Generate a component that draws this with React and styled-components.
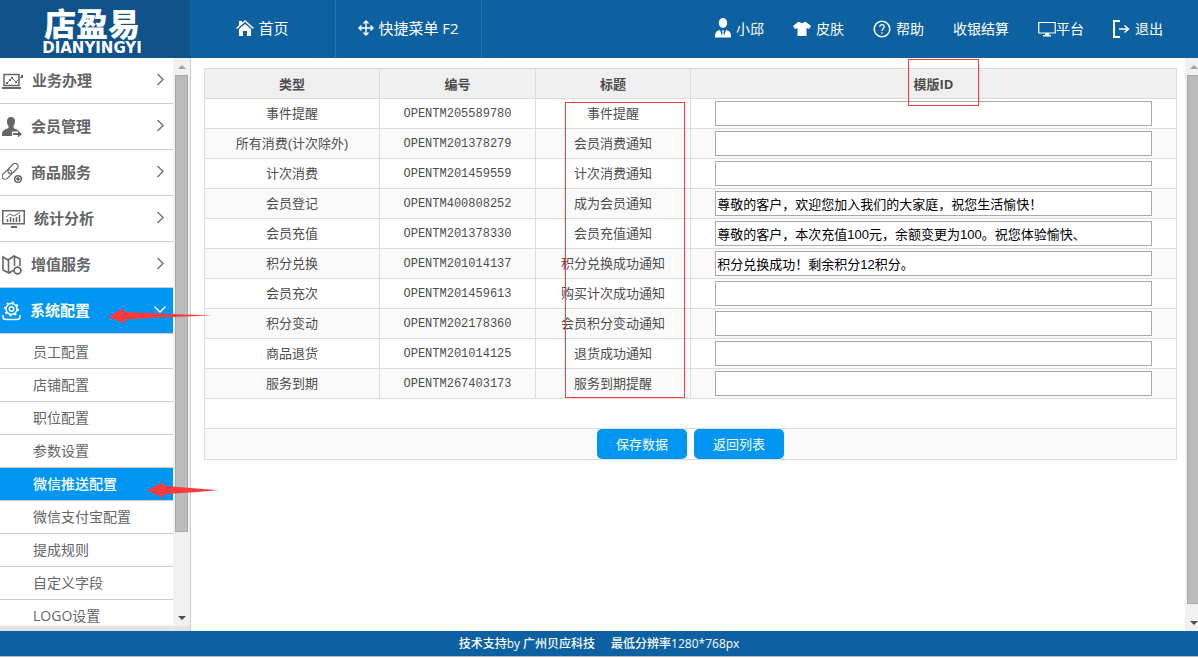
import React from "react";
import styled, { createGlobalStyle, css } from "styled-components";

const GlobalStyle = createGlobalStyle`
  * { box-sizing: border-box; }
  body {
    margin: 0;
    background: #fff;
    color: #4d4d4d;
    font: 13px/20px "Open Sans", "Noto Sans CJK SC", sans-serif;
  }
  a { color: inherit; text-decoration: none; }
`;

const Page = styled.div`
  display: flex;
  flex-direction: column;
  height: 100vh;
  overflow: hidden;
`;

const Header = styled.header`
  display: flex;
  flex: none;
  height: 58px;
  background: #0d61a1;
  color: #fff;
`;

const Logo = styled.a`
  display: flex;
  flex-direction: column;
  align-items: center;
  gap: 4px;
  width: 190px;
  padding: 6px 6px 0 0;
  background: #10528a;
`;

const LogoName = styled.span`
  font: 900 32px/32px "Noto Sans CJK SC", sans-serif;
`;

const LogoLatin = styled.span`
  font: bold 15px/12px "DejaVu Sans", sans-serif;
`;

const MainNav = styled.nav`
  display: flex;
  flex: 1;
`;

const NavItem = styled.a`
  display: flex;
  align-items: center;
  justify-content: center;
  gap: 4px;
  width: 146px;
  padding-bottom: 2px;
  border-right: 1px solid #2a74ad;
  font-size: 15px;
`;

const UserNav = styled.nav`
  display: flex;
  gap: 29px;
  padding-right: 35px;
`;

const UserItem = styled.a`
  display: flex;
  align-items: center;
  gap: ${(p) => (p.$tight ? "0" : "5px")};
  font-size: 14px;
`;

const Body = styled.div`
  display: flex;
  flex: 1;
  min-height: 0;
`;

const Sidebar = styled.aside`
  position: relative;
  display: flex;
  flex: none;
  flex-direction: column;
  width: 191px;
  border-right: 1px solid #ccc;
`;

const SidebarView = styled.div`
  display: flex;
  flex: 1;
  min-height: 0;
`;

const SidebarEdge = styled.div`
  height: 5px;
  background: #e4e4e4;
`;

const Menu = styled.nav`
  flex: 1;
  overflow: hidden;
`;

const MenuItem = styled.a`
  display: flex;
  align-items: center;
  gap: 9px;
  height: 46px;
  padding: 0 6px 0 2px;
  border-bottom: 1px solid #ccc;
  font-size: 15px;
  font-weight: bold;
  color: #666;
  ${(p) => p.$active && css`
    background: #0096f2;
    color: #fff;
  `}
`;

const MenuLabel = styled.span`
  flex: 1;
  padding-bottom: 2px;
`;

const SubMenu = styled.div`
  padding-top: 2px;
`;

const SubItem = styled.a`
  display: block;
  height: 33px;
  padding-left: 33px;
  border-bottom: 1px solid #ccc;
  font-size: 14px;
  line-height: 32px;
  color: #666;
  ${(p) => p.$active && css`
    background: #0096f2;
    color: #fff;
    font-weight: 500;
  `}
`;

const Bar = styled.div`
  display: flex;
  flex: none;
  flex-direction: column;
  width: ${(p) => p.$width};
  overflow: hidden;
  background: #f1f1f1;
`;

const BarArrow = styled.span`
  display: flex;
  align-items: center;
  flex: none;
  height: 17px;
  padding-left: 5px;
`;

const BarThumb = styled.span`
  flex: ${(p) => p.$share} 0 0;
  width: 13px;
  margin-left: 2px;
  border: 1px solid #a8a8a8;
  background: #bbb;
`;

const BarRest = styled.span`
  flex: ${(p) => p.$share} 0 0;
`;

const Pointer = styled.svg`
  position: absolute;
  z-index: 2;
  left: ${(p) => p.$left};
  top: ${(p) => p.$top};
  pointer-events: none;
`;

const Content = styled.main`
  flex: 1;
  min-width: 0;
  padding: 10px 8px 0 13px;
`;

const TableArea = styled.div`
  position: relative;
`;

const Table = styled.table`
  width: 100%;
  table-layout: fixed;
  border-collapse: collapse;
  border: 1px solid #dcdcdc;
`;

const Column = styled.col`
  width: ${(p) => p.$width};
`;

const Row = styled.tr`
  height: 30px;
  background: ${(p) => (p.$striped ? "#fafafa" : "#fff")};
`;

const HeadCell = styled.th`
  padding: 0;
  border: 1px solid #dcdcdc;
  background: #f0f0f0;
`;

const Cell = styled.td`
  height: 30px;
  padding: 0;
  border: 1px solid #dcdcdc;
  text-align: center;
  font-family: ${(p) => (p.$code ? '"Liberation Mono", monospace' : '"Liberation Sans", "Noto Sans CJK SC", sans-serif')};
  font-size: ${(p) => (p.$code ? "12px" : "13px")};
`;

const Marked = styled.span`
  position: relative;
`;

const Frame = styled.span`
  position: absolute;
  z-index: 1;
  left: ${(p) => p.$left};
  top: ${(p) => p.$top};
  width: ${(p) => p.$width};
  height: ${(p) => p.$height};
  border: 1px solid #fa3c3c;
  pointer-events: none;
`;

const Field = styled.input`
  display: block;
  width: 90%;
  height: 25px;
  margin: 0 auto;
  padding: 1px;
  border: 1px solid #a9a9a9;
  border-radius: 0;
  background: #fff;
  color: #000;
  font: 13px "Liberation Sans", "Noto Sans CJK SC", sans-serif;
`;

const Actions = styled.div`
  display: flex;
  justify-content: center;
  gap: 7px;
`;

const Button = styled.button`
  width: 90px;
  height: 30px;
  padding: 0 0 2px;
  border: 0;
  border-radius: 5px;
  background: #0096f2;
  color: #fff;
  font: 13px "Noto Sans CJK SC", sans-serif;
`;

const Footer = styled.footer`
  display: flex;
  flex: none;
  justify-content: center;
  gap: 16px;
  height: 26px;
  margin-bottom: 2px;
  border-bottom: 1px solid #b8b8b8;
  background: #0d61a1;
  color: #fff;
  font-size: 12px;
  font-weight: 500;
  line-height: 25px;
`;

const HomeIcon = () => (
  <svg width="18" height="18" viewBox="0 0 18 18" fill="#fff">
    <path d="M0 9 9 1l9 8-1 1-8-7-8 7zM3 2h3v2L3 7z" />
    <path d="M3 10l6-5 6 5v7h-4v-5H7v5H3z" />
  </svg>
);

const MoveIcon = () => (
  <svg width="16" height="16" viewBox="0 0 16 16" fill="none" stroke="#fff" strokeWidth="1.4">
    <path d="M8 1v14M1 8h14M5.5 3.5 8 1l2.5 2.5M5.5 12.500 8 15l2.500-2.500M3.500 5.500 1 8l2.500 2.500M12.500 5.500 15 8l-2.500 2.500" />
  </svg>
);

const UserIcon = () => (
  <svg width="16" height="22" viewBox="0 0 16 22" fill="#fff">
    <ellipse cx="8" cy="5" rx="4.200" ry="5" />
    <path d="M0 19.500v-2c0-3 2-5 5-5.500l2 6 .5-4-.8-1.500h2.600l-.8 1.500.5 4 2-6c3 .5 5 2.500 5 5.500v2z" />
  </svg>
);

const ShirtIcon = () => (
  <svg width="18" height="16" viewBox="0 0 18 16" fill="#fff">
    <path d="M0 5 5 1h2q2 2.500 4 0h2l5 4-2 3-2.500-1V15h-9V7L2 8z" />
  </svg>
);

const HelpIcon = () => (
  <svg width="18" height="18" viewBox="0 0 18 18" fill="none" stroke="#fff" strokeWidth="1.500">
    <circle cx="9" cy="9" r="7.800" />
    <path d="M6.800 7c0-3.200 4.600-3 4.500-.2C11.200 8.500 9 8.600 9 11M9 12.300v1.500" strokeWidth="1.200" />
  </svg>
);

const ScreenIcon = () => (
  <svg width="18" height="16" viewBox="0 0 18 16" fill="none" stroke="#fff">
    <path d="M.75 1.500h16.500v10.500H.75z" strokeWidth="1.200" />
    <path d="M7 12h4v2h2v1.500H5V14h2z" fill="#fff" stroke="none" />
  </svg>
);

const ExitIcon = () => (
  <svg width="17" height="18" viewBox="0 0 17 18" fill="none" stroke="#fff" strokeWidth="2">
    <path d="M7 1H1v16h6" />
    <path d="M6 9h9M11.500 5.500 15.500 9l-4 3.500" strokeWidth="1.600" />
  </svg>
);

const BusinessIcon = () => (
  <svg width="21" height="18" viewBox="0 0 21 18" fill="none" stroke="#666">
    <path d="M2 2.500h15v11H2z" strokeWidth="1.500" />
    <path d="M0 16h19" strokeWidth="2" />
    <path d="M5 11l3-3 2-2 4 4 6-6" />
    <path d="M5 10v2M8 7v2M10 5v2M14 9v2M20 3v3" strokeWidth="2" />
  </svg>
);

const MemberIcon = () => (
  <svg width="20" height="20" viewBox="0 0 20 20" fill="#666">
    <path d="M9 0c3 0 4.300 2 4 5-.2 2-1 3-1.500 4v2c2 1 4 1.500 5 3l-2 .5H10v4.500H0c0-5 1-6 6.500-8V9C5.500 8 5 7 5 5c-.3-3 1-5 4-5z" />
    <path d="M11 16h5v-2.500l4 3.500-4 3.500V18h-5z" />
  </svg>
);

const LinkIcon = () => (
  <svg width="20" height="20" viewBox="0 0 20 20" fill="none" stroke="#666" strokeWidth="1.200">
    <rect x="-5.500" y="-3" width="11" height="6" rx="3" transform="translate(5 11.500) rotate(-45)" />
    <rect x="-6" y="-3" width="12" height="6" rx="3" transform="translate(11 5.500) rotate(-45)" />
    <circle cx="16" cy="16" r="3.300" strokeWidth="1.500" />
    <path d="M16 14v4M14 16h4" strokeWidth="1.500" />
  </svg>
);

const StatsIcon = () => (
  <svg width="23" height="20" viewBox="0 0 23 20" fill="none" stroke="#666">
    <path d="M.75 1.750h21.500v13H.75z" strokeWidth="1.500" />
    <path d="M9 18h6" strokeWidth="2" />
    <path d="M5.500 13v-3M8.500 13V8M11.500 13V9M14.500 13V8M17.500 13V6" strokeWidth="1.500" />
    <path d="M4 8l4-3 4 2 6-3.500" />
  </svg>
);

const MapIcon = () => (
  <svg width="20" height="20" viewBox="0 0 20 20" fill="none" stroke="#666" strokeWidth="1.600">
    <path d="M11 15.500l-4 2.500-6-3V2l5 3 6-4 6 3v7M6.500 5v13M12.500 1v10" />
    <circle cx="15.500" cy="15.500" r="3.300" />
    <path d="M15.500 12v-1M15.500 20v-1M12 15.500h-1M20 15.500h-1" />
  </svg>
);

const GearIcon = () => (
  <svg width="19" height="20" viewBox="0 0 19 20" fill="none" stroke="#fff" strokeWidth="1.500">
    <circle cx="9.500" cy="8" r="5.500" />
    <circle cx="9.500" cy="8" r="2.200" />
    <circle cx="9.500" cy="8" r="6.700" strokeWidth="1.800" strokeDasharray="2 3.260" />
    <path d="M1 14v2q0 2.500 3 2.500h11q3 0 3-2.500v-2" />
  </svg>
);

const Chevron = ({ open }) => (
  <svg width="14" height="14" viewBox="0 0 14 14" fill="none" stroke={open ? "#fff" : "#777"} strokeWidth="1.500">
    <path d={open ? "M1.500 2.500 7 8l5.500-5.500" : "M4.500 0 10 5.500l-5.500 5.500"} />
  </svg>
);

const ScrollBar = ({ width, thumb, rest }) => (
  <Bar $width={width} aria-hidden="true">
    <BarArrow>
      <svg width="8" height="4" viewBox="0 0 8 4" fill="#a0a0a0"><path d="M0 4 4 0l4 4z" /></svg>
    </BarArrow>
    <BarThumb $share={thumb} />
    <BarRest $share={rest} />
    <BarArrow>
      <svg width="8" height="4" viewBox="0 0 8 4" fill="#505050"><path d="M0 0h8L4 4z" /></svg>
    </BarArrow>
  </Bar>
);

const menu = [
  ["业务办理", BusinessIcon],
  ["会员管理", MemberIcon],
  ["商品服务", LinkIcon],
  ["统计分析", StatsIcon],
  ["增值服务", MapIcon],
  ["系统配置", GearIcon],
];

const subMenu = ["员工配置", "店铺配置", "职位配置", "参数设置", "微信推送配置", "微信支付宝配置", "提成规则", "自定义字段", "LOGO设置"];

const templates = [
  ["事件提醒", "OPENTM205589780", "事件提醒", ""],
  ["所有消费(计次除外)", "OPENTM201378279", "会员消费通知", ""],
  ["计次消费", "OPENTM201459559", "计次消费通知", ""],
  ["会员登记", "OPENTM400808252", "成为会员通知", "尊敬的客户，欢迎您加入我们的大家庭，祝您生活愉快！"],
  ["会员充值", "OPENTM201378330", "会员充值通知", "尊敬的客户，本次充值100元，余额变更为100。祝您体验愉快、"],
  ["积分兑换", "OPENTM201014137", "积分兑换成功通知", "积分兑换成功！剩余积分12积分。"],
  ["会员充次", "OPENTM201459613", "购买计次成功通知", ""],
  ["积分变动", "OPENTM202178360", "会员积分变动通知", ""],
  ["商品退货", "OPENTM201014125", "退货成功通知", ""],
  ["服务到期", "OPENTM267403173", "服务到期提醒", ""],
];

export default function App() {
  return (
    <Page>
      <GlobalStyle />
      <Header>
        <Logo href="#">
          <LogoName>店盈易</LogoName>
          <LogoLatin>DIANYINGYI</LogoLatin>
        </Logo>
        <MainNav>
          <NavItem href="#"><HomeIcon />首页</NavItem>
          <NavItem href="#"><MoveIcon />快捷菜单 F2</NavItem>
        </MainNav>
        <UserNav>
          <UserItem href="#"><UserIcon />小邱</UserItem>
          <UserItem href="#"><ShirtIcon />皮肤</UserItem>
          <UserItem href="#"><HelpIcon />帮助</UserItem>
          <UserItem href="#">收银结算</UserItem>
          <UserItem href="#" $tight><ScreenIcon />平台</UserItem>
          <UserItem href="#"><ExitIcon />退出</UserItem>
        </UserNav>
      </Header>
      <Body>
        <Sidebar>
          <SidebarView>
            <Menu>
              {menu.map(([label, Icon]) => {
                const active = label === "系统配置";
                return (
                  <MenuItem key={label} href="#" $active={active}>
                    <Icon />
                    <MenuLabel>{label}</MenuLabel>
                    <Chevron open={active} />
                  </MenuItem>
                );
              })}
              <SubMenu>
                {subMenu.map((label) => (
                  <SubItem key={label} href="#" $active={label === "微信推送配置"}>{label}</SubItem>
                ))}
              </SubMenu>
            </Menu>
            <ScrollBar width="17px" thumb={457} rest={77} />
          </SidebarView>
          <SidebarEdge />
          <Pointer $left="108px" $top="250px" width="104" height="16" viewBox="0 0 104 16" fill="#fb3b3b">
            <path d="M0 8.700 16 0v4l40 1.700 48 1.800-48 1.800-39 2.200.5 4.200z" />
          </Pointer>
          <Pointer $left="147px" $top="424px" width="71" height="16" viewBox="0 0 71 16" fill="#fb3b3b">
            <path d="M0 8.300 16.500 0v3.700L50 6.500l21 1.800-21 1.800-33.500 2.200v3.700z" />
          </Pointer>
        </Sidebar>
        <Content>
          <TableArea>
            <Table>
              <colgroup>
                <Column $width="175px" />
                <Column $width="156px" />
                <Column $width="155px" />
                <Column />
              </colgroup>
              <thead>
                <Row>
                  <HeadCell>类型</HeadCell>
                  <HeadCell>编号</HeadCell>
                  <HeadCell>标题</HeadCell>
                  <HeadCell>
                    <Marked>模版ID<Frame $left="-6px" $top="-16px" $width="71px" $height="47px" /></Marked>
                  </HeadCell>
                </Row>
              </thead>
              <tbody>
                {templates.map(([type, code, title, text], i) => (
                  <Row key={code} $striped={i % 2 === 1}>
                    <Cell>{type}</Cell>
                    <Cell $code>{code}</Cell>
                    <Cell>{title}</Cell>
                    <Cell><Field type="text" aria-label={`${type} 模版ID`} defaultValue={text} /></Cell>
                  </Row>
                ))}
                <Row><Cell colSpan={4} /></Row>
                <Row $striped>
                  <Cell colSpan={4}>
                    <Actions>
                      <Button type="button">保存数据</Button>
                      <Button type="button">返回列表</Button>
                    </Actions>
                  </Cell>
                </Row>
              </tbody>
            </Table>
            <Frame $left="361px" $top="34px" $width="120px" $height="296px" />
          </TableArea>
        </Content>
        <ScrollBar width="13px" thumb={529} rest={10} />
      </Body>
      <Footer>
        <span>技术支持by 广州贝应科技</span>
        <span>最低分辨率1280*768px</span>
      </Footer>
    </Page>
  );
}
